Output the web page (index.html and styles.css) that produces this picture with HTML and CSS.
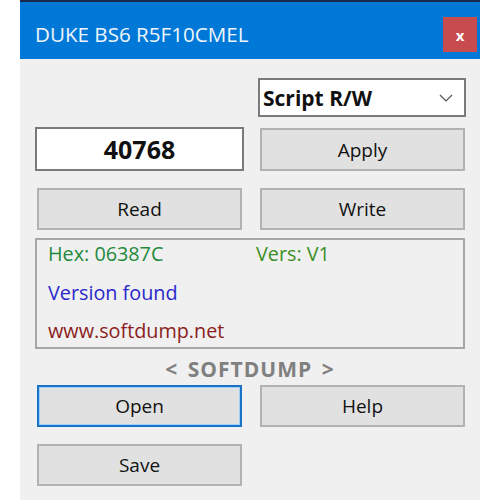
FILE: index.html
```html
<!DOCTYPE html>
<html>
<head>
<meta charset="utf-8">
<link rel="stylesheet" href="styles.css">
</head>
<body>
<div class="window">
  <div class="titlebar">
    <span class="title">DUKE BS6 R5F10CMEL</span>
    <span class="close">x</span>
  </div>
  <div class="content">
    <div class="row row-select">
      <div></div>
      <div class="select">
        <span>Script R/W</span>
        <svg class="chev" width="14" height="8" viewBox="0 0 14 8"><path d="M1 1 L7 7 L13 1" fill="none" stroke="#555" stroke-width="1.2"/></svg>
      </div>
    </div>
    <div class="row row-input">
      <div class="textbox">40768</div>
      <div class="btn btn-apply">Apply</div>
    </div>
    <div class="row row-rw">
      <div class="btn">Read</div>
      <div class="btn">Write</div>
    </div>
    <div class="info">
      <div class="info-line"><span class="hex">Hex: 06387C</span><span class="vers">Vers: V1</span></div>
      <div class="info-line found">Version found</div>
      <div class="info-line site">www.softdump.net</div>
    </div>
    <div class="brand">&lt; SOFTDUMP &gt;</div>
    <div class="row row-open">
      <div class="btn btn-focus">Open</div>
      <div class="btn">Help</div>
    </div>
    <div class="row row-save">
      <div class="btn">Save</div>
      <div></div>
    </div>
  </div>
</div>
</body>
</html>
```
FILE: styles.css
```css
html, body {
  margin: 0;
  background: #ffffff;
}
body {
  font-family: "Open Sans", "Noto Sans", sans-serif;
  color: #111;
}
.window {
  margin-left: 20px;
  width: 460px;
  height: 498px;
  background: #f0f0f0;
  border-top: 2px solid #1b2a4c;
  overflow: hidden;
}
.titlebar {
  height: 57px;
  background: #0078d7;
  display: flex;
  align-items: flex-start;
}
.title {
  color: #eef5fc;
  font-size: 20.6px;
  line-height: 24px;
  margin-top: 20px;
  margin-left: 15px;
}
.close {
  margin-left: auto;
  margin-right: 3px;
  margin-top: 15px;
  width: 34px;
  height: 35px;
  background: #c84b4d;
  color: #fff;
  font-weight: bold;
  font-size: 15px;
  display: flex;
  align-items: center;
  justify-content: center;
}
.content {
  padding: 19px 15px 0 15px;
  display: flex;
  flex-direction: column;
}
.row {
  display: grid;
  grid-template-columns: 209px 205px;
  column-gap: 16px;
}
.select {
  margin-left: -2px;
  margin-right: -1px;
  height: 39px;
  box-sizing: border-box;
  background: #fff;
  border: 2px solid #7a7a7a;
  display: flex;
  align-items: center;
  padding-left: 3px;
  padding-right: 11px;
  font-weight: bold;
  font-size: 21px;
}
.select span { flex: 1; }
.chev { display: block; }
.row-input { margin-top: 10px; }
.textbox {
  height: 44px;
  box-sizing: border-box;
  border: 2px solid #7a7a7a;
  background: #fff;
  display: flex;
  align-items: center;
  justify-content: center;
  font-weight: bold;
  font-size: 25px;
}
.btn {
  height: 42px;
  box-sizing: border-box;
  background: #e1e1e1;
  border: 2px solid #b2b2b2;
  display: flex;
  align-items: center;
  justify-content: center;
  font-size: 19px;
  color: #111;
}
.row-input .btn-apply { margin-top: 1px; height: 43px; }
.row-rw { margin-top: 17px; }
.row-rw .btn:first-child,
.row-open .btn:first-child,
.row-save .btn:first-child { margin: 0 2px; }
.info {
  margin-top: 8px;
  height: 111px;
  box-sizing: border-box;
  border: 2px solid #a7a7a7;
  padding: 1px 0 0 11px;
  font-size: 19.8px;
}
.info-line {
  height: 38.5px;
  line-height: 26px;
  display: flex;
}
.hex { color: #1f8a3d; width: 208px; }
.vers { color: #3c8f22; }
.found { color: #2a27cc; }
.site { color: #8c1d1d; }
.brand {
  height: 36px;
  line-height: 40px;
  text-align: center;
  font-weight: bold;
  font-size: 21px;
  letter-spacing: 1px;
  word-spacing: 3px;
  color: #808080;
}
.btn-focus {
  border: 2px solid #1a73c8;
  box-shadow: inset 0 0 0 1px #9fd0f5;
}
.row-save { margin-top: 17px; }
```
